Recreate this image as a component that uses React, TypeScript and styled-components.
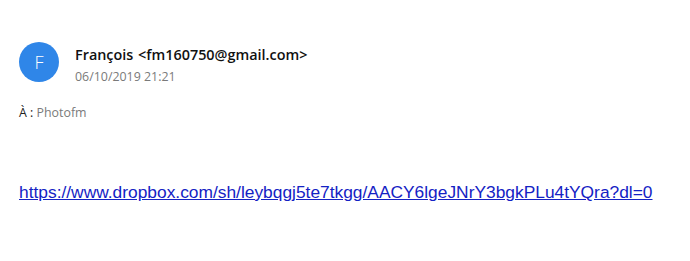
import React from "react";
import styled, { createGlobalStyle } from "styled-components";

const Global = createGlobalStyle`
  html, body { margin: 0; padding: 0; background: #fff; }
  body { font-family: "Open Sans", "Noto Sans", sans-serif; }
`;

const Page = styled.div`
  padding: 42px 19px 0 19px;
  display: flex;
  flex-direction: column;
`;

const Header = styled.div`
  display: flex;
  align-items: flex-start;
  gap: 16px;
`;

const Avatar = styled.div`
  width: 40px;
  height: 40px;
  border-radius: 50%;
  background: #2f86e8;
  color: #fff;
  display: flex;
  align-items: center;
  justify-content: center;
  font-size: 18px;
  font-weight: 300;
  font-family: "Open Sans", sans-serif;
`;

const Meta = styled.div`
  display: flex;
  flex-direction: column;
  padding-top: 3px;
`;

const Sender = styled.div`
  font-size: 14.4px;
  font-weight: 600;
  color: #111;
  line-height: 20px;
  word-spacing: 1px;
`;

const DateLine = styled.div`
  font-size: 12.4px;
  color: #7a7a7a;
  line-height: 18px;
  margin-top: 3px;
`;

const Recipients = styled.div`
  margin-top: 18px;
  font-size: 12.4px;
  line-height: 18px;
  color: #222;
`;

const Muted = styled.span`
  color: #7a7a7a;
`;

const Body = styled.div`
  margin-top: 60px;
  font-family: "Liberation Sans", Arial, sans-serif;
  font-size: 17.36px;
`;

const Link = styled.a`
  color: #1422c4;
  text-decoration: underline;
`;

export default function App() {
  return (
    <>
      <Global />
      <Page>
        <Header>
          <Avatar>F</Avatar>
          <Meta>
            <Sender>François &lt;fm160750@gmail.com&gt;</Sender>
            <DateLine>06/10/2019 21:21</DateLine>
          </Meta>
        </Header>
        <Recipients>
          À : <Muted>Photofm</Muted>
        </Recipients>
        <Body>
          <Link href="#">https://www.dropbox.com/sh/leybqgj5te7tkgg/AACY6lgeJNrY3bgkPLu4tYQra?dl=0</Link>
        </Body>
      </Page>
    </>
  );
}
